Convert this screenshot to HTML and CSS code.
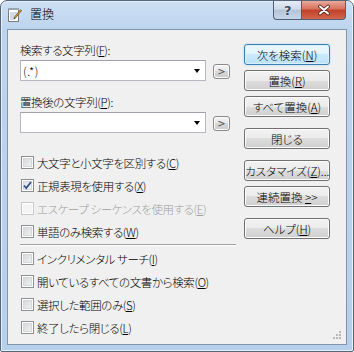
FILE: index.html
```html
<!DOCTYPE html>
<html lang="ja">
<head>
  <meta charset="UTF-8">
  <title>置換</title>
  <link rel="stylesheet" href="styles.css">
</head>
<body>

<div class="window">
  <!-- タイトルバー -->
  <div class="titlebar">
    <svg class="app-icon" width="16" height="16" viewBox="0 0 16 16">
      <rect x="1.5" y="2.5" width="10" height="12" fill="#fff" stroke="#7a7a7a"/>
      <rect x="1" y="1" width="11" height="2" fill="#9aa4b0"/>
      <path d="M3 6h7M3 8h7M3 10h5M3 12h4" stroke="#9db6d3"/>
      <path d="M14.5 3.5l-6 7.5-1.5 1 .4-1.7 6-7.5z" fill="#e8b54a" stroke="#6b4a12" stroke-width=".8"/>
      <path d="M7 12l.4-1.7 1.1.9z" fill="#333"/>
    </svg>
    <span class="title">置換</span>
    <div class="caption-btns">
      <div class="cap help">?</div>
      <div class="cap close">
        <svg width="16" height="12" viewBox="0 0 16 12">
          <path d="M4 2.5l8 7M12 2.5l-8 7" stroke="#4a2218" stroke-width="3.6" stroke-linecap="round"/>
          <path d="M4 2.5l8 7M12 2.5l-8 7" stroke="#fff" stroke-width="2" stroke-linecap="round"/>
        </svg>
      </div>
    </div>
  </div>

  <!-- クライアント領域 -->
  <div class="client">
    <div class="left">
      <div class="field-label">検索する文字列(<u>F</u>):</div>
      <div class="combo-row">
        <div class="combo"><span class="combo-text">(.*)</span><i class="arrow"></i></div>
        <button class="mini">&gt;</button>
      </div>

      <div class="field-label second">置換後の文字列(<u>P</u>):</div>
      <div class="combo-row">
        <div class="combo"><span class="combo-text"></span><i class="arrow"></i></div>
        <button class="mini">&gt;</button>
      </div>

      <div class="checks">
        <div class="check"><span class="box"></span>大文字と小文字を区別する(<u>C</u>)</div>
        <div class="check"><span class="box checked">
          <svg width="9" height="9" viewBox="0 0 9 9"><path d="M1 4.5l2.3 2.6L8 1" fill="none" stroke="#33508f" stroke-width="1.8"/></svg>
        </span>正規表現を使用する(<u>X</u>)</div>
        <div class="check disabled"><span class="box"></span>エスケープ シーケンスを使用する(<u>E</u>)</div>
        <div class="check"><span class="box"></span>単語のみ検索する(<u>W</u>)</div>
        <div class="sep"></div>
        <div class="check"><span class="box"></span>インクリメンタル サーチ(<u>I</u>)</div>
        <div class="check"><span class="box"></span>開いているすべての文書から検索(<u>O</u>)</div>
        <div class="check"><span class="box"></span>選択した範囲のみ(<u>S</u>)</div>
        <div class="check"><span class="box"></span>終了したら閉じる(<u>L</u>)</div>
      </div>
    </div>

    <div class="right">
      <div class="group">
        <button class="btn default">次を検索(<u>N</u>)</button>
        <button class="btn">置換(<u>R</u>)</button>
        <button class="btn">すべて置換(<u>A</u>)</button>
      </div>
      <div class="group">
        <button class="btn">閉じる</button>
      </div>
      <div class="group">
        <button class="btn">カスタマイズ(<u>Z</u>)...</button>
        <button class="btn">連続置換 <u>&gt;</u>&gt;</button>
      </div>
      <div class="group">
        <button class="btn">ヘルプ(<u>H</u>)</button>
      </div>
    </div>

    <svg class="grip" width="9" height="9" viewBox="0 0 9 9">
      <g fill="#b8b8b8">
        <rect x="6" y="0" width="2" height="2"/>
        <rect x="3" y="3" width="2" height="2"/><rect x="6" y="3" width="2" height="2"/>
        <rect x="0" y="6" width="2" height="2"/><rect x="3" y="6" width="2" height="2"/><rect x="6" y="6" width="2" height="2"/>
      </g>
    </svg>
  </div>
</div>

</body>
</html>
```

FILE: styles.css
```css
*{box-sizing:border-box}
body{margin:0;background:#fff;font-family:"Noto Sans CJK JP","Noto Sans",sans-serif;font-size:11.5px;font-weight:300;letter-spacing:-.4px;font-feature-settings:"palt";color:#000}
u{text-decoration:underline;text-underline-offset:1px}

/* ウィンドウ枠 */
.window{width:354px;height:352px;border:1px solid #56677c;border-radius:7px 7px 2px 2px;background:linear-gradient(#cddff3 0,#bcd4ee 30px,#b6cfeb 100%);padding:0 6px 6px;display:flex;flex-direction:column;box-shadow:inset 0 0 0 1px #e6f0fb}
.titlebar{height:28px;display:flex;align-items:flex-start;flex:none}
.app-icon{margin:6px 0 0 0}
.title{margin:5px 0 0 7px;font-size:12px;line-height:16px;letter-spacing:0}
.caption-btns{margin-left:auto;margin-right:1px;display:flex;height:19px}
.cap{height:19px;display:flex;align-items:center;justify-content:center;border:1px solid #4f5e70;border-top:none}
.help{width:28px;border-radius:0 0 0 4px;border-right:none;background:linear-gradient(#e3ecf6 0,#cfdbe8 45%,#b4c4d8 50%,#c6d5e6 100%);color:#3a4a5e;font:bold 13px "DejaVu Sans",sans-serif;text-shadow:0 0 2px #fff}
.close{width:45px;border-radius:0 0 4px 0;background:linear-gradient(#e9a99c 0,#d7705b 45%,#c2402a 50%,#d2654d 100%)}

/* クライアント */
.client{flex:1;position:relative;background:#f0f0f0;border:1px solid #8196ad;display:flex;padding:12px 15px 0 12px;gap:8px}
.left{width:216px;flex:none}
.field-label{line-height:16px;margin-bottom:2px}
.field-label.second{margin-top:13px}
.combo-row{display:flex;align-items:center;gap:7px}
.combo{width:186px;height:21px;background:#fff;border:1px solid #b5b9bf;border-top-color:#9ea2a8;display:flex;align-items:center;padding:0 0 0 2px}
.combo-text{flex:1;line-height:16px;letter-spacing:.6px}
.arrow{width:0;height:0;border-left:3.5px solid transparent;border-right:3.5px solid transparent;border-top:4px solid #000;margin-right:5px}
.mini{width:17px;height:15px;margin-top:2px;padding:0;border:1px solid #8a8a8a;border-radius:3px;background:linear-gradient(#f4f4f4 0,#e6e6e6 50%,#d8d8d8 50%,#cdcdcd 100%);box-shadow:inset 0 0 0 1px #fbfbfb;font:10px "DejaVu Sans",sans-serif;color:#555;line-height:12px}

.checks{margin-top:18px}
.check{height:23px;display:flex;align-items:center;padding-left:1px;white-space:nowrap}
.check.disabled{color:#a0a0a0}
.box{width:13px;height:13px;flex:none;margin-right:3px;border:1px solid #8e8f8f;background:linear-gradient(135deg,#cfd1d3,#f7f7f7);box-shadow:inset 0 0 0 1px #fff,inset 0 0 0 2px #d4d6d8;display:flex;align-items:center;justify-content:center}
.box.checked{background:linear-gradient(135deg,#d8dbdf,#fafafa)}
.check.disabled .box{border-color:#c8c8c8;background:#f4f4f4;box-shadow:inset 0 0 0 1px #fff}
.sep{height:2px;border-top:1px solid #a0a0a0;border-bottom:1px solid #fff;margin:1px 0 1px 0}

.right{width:86px;margin-top:2px;display:flex;flex-direction:column;gap:11px}
.group{display:flex;flex-direction:column;gap:5px}
.btn{height:21px;padding:0;border:1px solid #707070;border-radius:3px;background:linear-gradient(#f2f2f2 0,#ebebeb 50%,#dddddd 50%,#cfcfcf 100%);box-shadow:inset 0 0 0 1px #fcfcfc;font:inherit;line-height:16px;color:#000;white-space:nowrap}
.btn.default{border-color:#3c7fb1;background:linear-gradient(#eef8fe 0,#e0f3fd 50%,#cbebfd 50%,#b9e1f8 100%);box-shadow:inset 0 0 0 1px #d9f0fc,0 0 2px #9fd2f4}

.grip{position:absolute;right:4px;bottom:4px}
```
